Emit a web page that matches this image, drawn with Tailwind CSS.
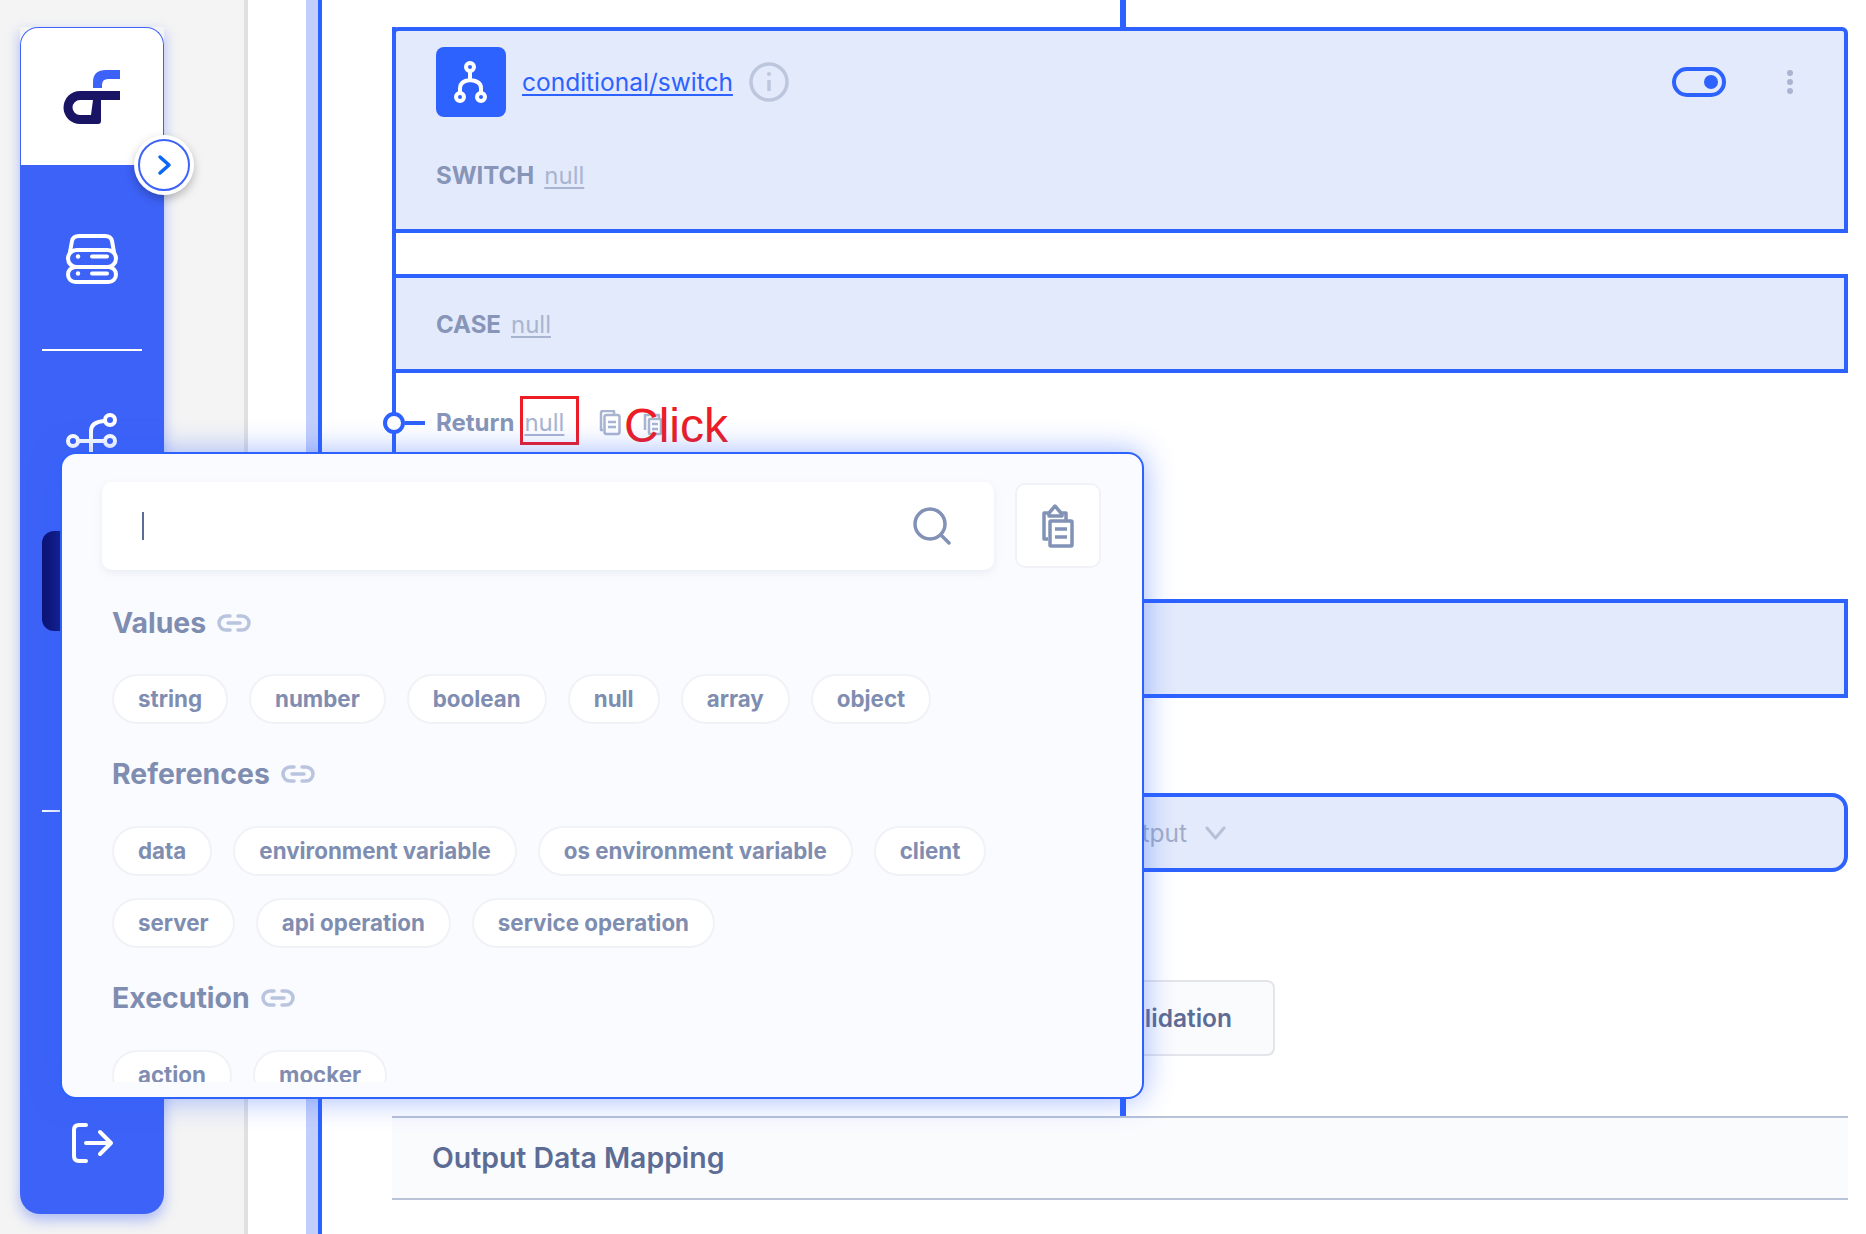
<!DOCTYPE html>
<html lang="en">
<head>
  <meta charset="UTF-8" />
  <meta name="viewport" content="width=device-width, initial-scale=1.0"/>
  <title>Flow editor</title>
  <script src="https://cdn.jsdelivr.net/npm/@tailwindcss/browser@4"></script>
</head>
<body class="relative flex h-[1234px] overflow-hidden bg-white font-['Inter',sans-serif]">
  <!-- Sidebar -->
  <aside class="w-[248px] h-full shrink-0 bg-[#f4f4f4] border-r-4 border-[#e0e0e0] pl-5 pt-[27px]">
    <div class="relative w-[144px] h-[1187px] flex flex-col rounded-b-[20px] shadow-[0_6px_14px_rgba(61,98,247,0.4)]">
      <div class="h-[138px] shrink-0 bg-white border border-b-0 border-[#3d62f7] rounded-t-[18px] flex items-center justify-center">
        <svg class="w-[58px] h-[56px]" viewBox="63 69 58 56">
          <path fill="#3d62f7" d="M93 88 V82 Q93 70 106 70 H120 V79 H108 Q102 79 102 85 V88 Z"/>
          <path fill="#1a1464" fill-rule="evenodd" d="M120 91 H80 A16.5 16.5 0 0 0 80 124 H98 Q101 124 101 121 V100 H120 Z M93 100 H80 A7.5 7.5 0 0 0 80 115 H91 Z"/>
        </svg>
      </div>
      <div class="flex-1 bg-[#3d62f7] rounded-b-[20px] flex flex-col items-center pt-[67px]">
        <svg class="w-[56px] h-[54px] shrink-0" viewBox="64 232 56 54" fill="none" stroke="#fff" stroke-width="4" stroke-linecap="round">
          <path d="M70 252 L72 241 Q73 236 79 236 H105 Q111 236 112 241 L114 252"/>
          <rect x="68" y="250" width="48" height="17" rx="8.5"/>
          <rect x="68" y="267" width="48" height="15" rx="7.5"/>
          <path d="M92 256.500 H107 M92 273.500 H107"/>
          <circle cx="78" cy="256.500" r="2.200" fill="#fff" stroke="none"/>
          <circle cx="78" cy="273.500" r="2.200" fill="#fff" stroke="none"/>
        </svg>
        <div class="w-[100px] h-[2px] bg-white mt-[63px] shrink-0"></div>
        <svg class="w-[56px] h-[50px] mt-[61px] shrink-0" viewBox="64 412 56 50" fill="none" stroke="#fff" stroke-width="4" stroke-linecap="round">
          <circle cx="73" cy="441" r="5"/>
          <circle cx="110" cy="441" r="5"/>
          <circle cx="110" cy="420" r="5"/>
          <path d="M78 441 H105 M91 462 V431 Q91 422 104 421"/>
        </svg>
        <div class="w-5 h-[100px] self-start ml-[22px] mt-[69px] bg-[#0b1070] rounded-l-[12px] shrink-0"></div>
        <div class="w-5 h-[2px] self-start ml-[22px] mt-[179px] bg-white shrink-0"></div>
        <svg class="w-[44px] h-[44px] mt-[309px] shrink-0" viewBox="70 1121 44 44" fill="none" stroke="#fff" stroke-width="4" stroke-linecap="round" stroke-linejoin="round">
          <path d="M86 1125 H79 Q74 1125 74 1130 V1156 Q74 1161 79 1161 H86"/>
          <path d="M86 1143 H110 M100 1132 L111 1143 L100 1154"/>
        </svg>
      </div>
      <!-- Collapse toggle -->
      <div class="absolute left-[114px] top-[108px] w-[60px] h-[60px] rounded-full bg-white shadow-[0_4px_10px_rgba(0,0,0,0.25)] flex items-center justify-center">
        <div class="w-[52px] h-[52px] rounded-full border-2 border-[#3d62f7] flex items-center justify-center">
          <svg class="w-[18px] h-[22px] ml-0.5" viewBox="0 0 18 22" fill="none" stroke="#0b67f5" stroke-width="3.500" stroke-linecap="round" stroke-linejoin="round"><path d="M4 3 L13 11 L4 19"/></svg>
        </div>
      </div>
    </div>
  </aside>

  <!-- Canvas -->
  <main class="flex-1 flex h-full min-w-0">
    <div class="ml-[58px] w-[16px] h-full shrink-0 bg-[#c3cffb] border-r-4 border-[#2d62ff]"></div>
    <div class="ml-[70px] w-[1456px] shrink-0 flex flex-col">
      <div class="ml-[728px] w-[6px] h-[27px] bg-[#2d62ff] shrink-0"></div>

      <div class="border-l-4 border-[#2d62ff] h-[766px] shrink-0">
        <!-- Switch block -->
        <section class="-ml-1 h-[206px] border-4 border-[#2d62ff] rounded-tl-[6px] rounded-tr-[6px] bg-[#e3eafb] pl-[40px] pr-[40px] pt-4">
          <div class="flex items-center h-[70px]">
            <div class="w-[70px] h-[70px] rounded-[8px] bg-[#2d62ff] flex items-center justify-center">
              <svg class="w-[44px] h-[48px]" viewBox="449 58 44 48" fill="none" stroke="#fff" stroke-width="4" stroke-linecap="round">
                <circle cx="470" cy="67" r="4"/><circle cx="460" cy="97" r="4"/><circle cx="481" cy="97" r="4"/>
                <path d="M470 71 V78 M460 93 V88 Q460 81 470 80 Q481 81 481 88 V93"/>
              </svg>
            </div>
            <a class="ml-4 text-[24.5px] leading-[30px] text-[#2d62ff] underline underline-offset-[3px]">conditional/switch</a>
            <svg class="ml-4 w-[40px] h-[40px]" viewBox="0 0 40 40" fill="none" stroke="#bcc7de" stroke-width="3.500"><circle cx="20" cy="20" r="18"/><path d="M20 18 V29"/><circle cx="20" cy="12" r="2" fill="#bcc7de" stroke="none"/></svg>
            <div class="ml-auto w-[54px] h-[30px] rounded-full border-4 border-[#2d62ff] flex items-center justify-end pr-[4px]"><span class="w-[14px] h-[14px] rounded-full bg-[#2d62ff]"></span></div>
            <div class="ml-[61px] mr-[11px] flex flex-col gap-[3px]">
              <span class="w-[6px] h-[6px] rounded-full bg-[#a9b5d0]"></span>
              <span class="w-[6px] h-[6px] rounded-full bg-[#a9b5d0]"></span>
              <span class="w-[6px] h-[6px] rounded-full bg-[#a9b5d0]"></span>
            </div>
          </div>
          <div class="mt-[44px] flex items-center gap-[10px] text-[24px] leading-[30px]">
            <span class="font-bold text-[#8795b8]">SWITCH</span>
            <span class="text-[#a9b5d0] underline underline-offset-[3px]">null</span>
          </div>
        </section>

        <!-- Case block -->
        <section class="-ml-1 mt-[41px] h-[99px] border-4 border-[#2d62ff] bg-[#e3eafb] pl-[40px] pt-[3px] flex items-center gap-[10px] text-[24px] leading-[30px]">
          <span class="font-bold text-[#8795b8]">CASE</span>
          <span class="text-[#a9b5d0] underline underline-offset-[3px]">null</span>
        </section>

        <!-- Return row -->
        <div class="relative h-[50px] mt-[25px] pl-[40px] flex items-center text-[24px] leading-[30px]">
          <span class="absolute -left-[13px] top-[14px] w-[22px] h-[22px] rounded-full bg-white border-4 border-[#2d62ff]"></span>
          <span class="absolute left-[9px] top-[23px] w-[20px] h-1 bg-[#2d62ff]"></span>
          <span class="font-bold text-[#8795b8]">Return</span>
          <span class="ml-[10px] text-[#a9b5d0] underline underline-offset-[3px]">null</span>
          <svg class="ml-[35px] w-[22px] h-[26px]" viewBox="0 0 22 26" fill="none" stroke="#a9b5d0" stroke-width="2.500" stroke-linejoin="round"><path d="M4 20 H2 V3 Q2 1 4 1 H15 V5"/><rect x="5.500" y="5" width="15" height="19" rx="2"/><path d="M9 12 H17 M9 17 H17"/></svg>
          <svg class="ml-[22px] w-[20px] h-[26px]" viewBox="0 0 20 26" fill="none" stroke="#a9b5d0" stroke-width="2.500" stroke-linejoin="round"><path d="M2 20 V5 H6 L9 2 L12 5 H16 V8"/><rect x="6" y="9" width="12" height="15" rx="1"/><path d="M9 14 H15 M9 19 H15"/></svg>
          <!-- Tutorial annotation -->
          <span class="absolute left-[124px] -top-[2px] w-[59px] h-[49px] border-[3px] border-[#ee1c25]"></span>
          <span class="absolute left-[228px] top-0 font-['Liberation_Sans',sans-serif] text-[48px] leading-[56px] text-[#ee1c25]">Click</span>
        </div>

        <section class="-ml-1 mt-[151px] h-[99px] border-4 border-[#2d62ff] bg-[#e3eafb]"></section>
      </div>

      <!-- Output select -->
      <section class="h-[79px] border-4 border-[#2d62ff] rounded-[16px] bg-[#e3eafb] flex items-center pl-[708px] gap-[18px] text-[24.5px] leading-[30px] text-[#a0acc8]">
        <span class="w-[83px] text-right">Output</span>
        <svg class="w-[21px] h-[14px]" viewBox="0 0 21 14" fill="none" stroke="#b6c1d8" stroke-width="3" stroke-linecap="round" stroke-linejoin="round"><path d="M2 2 L10.500 12 L19 2"/></svg>
      </section>

      <!-- Validation button -->
      <div class="mt-[108px] ml-[680px] w-[203px] h-[76px] rounded-[8px] border-2 border-[#e3e5ea] bg-[#fafbfd] flex items-center justify-end pr-[41px] text-[24.5px] font-semibold text-[#5d6c94]">Validation</div>

      <div class="ml-[728px] w-[6px] h-[60px] bg-[#2d62ff] shrink-0"></div>

      <!-- Output data mapping -->
      <section class="h-[84px] border-y-2 border-[#b8c2d9] bg-[#fafbfd] flex items-center pl-[40px] text-[28.4px] font-semibold text-[#5d6c94]">Output Data Mapping</section>
    </div>
  </main>

  <!-- Value picker popover -->
  <div class="absolute left-[60px] top-[452px] w-[1084px] h-[647px] rounded-[16px] border-2 border-[#2d62ff] bg-[#fafbfe] shadow-[0_0_30px_rgba(45,98,255,0.45)] pt-[28px] pl-[40px]">
    <div class="flex gap-[21px]">
      <div class="w-[892px] h-[88px] rounded-[10px] bg-white shadow-[0_3px_8px_rgba(90,110,160,0.1)] flex items-center pl-10 pr-[43px] justify-between">
        <span class="w-[2px] h-[28px] bg-[#5d6c94]"></span>
        <svg class="w-[38px] h-[40px]" viewBox="0 0 38 40" fill="none" stroke="#8192b6" stroke-width="3.500" stroke-linecap="round"><circle cx="17" cy="18" r="15"/><path d="M28 29 L36 37"/></svg>
      </div>
      <div class="w-[86px] h-[85px] mt-px rounded-[10px] bg-white border-2 border-[#f1f2f7] flex items-center justify-center">
        <svg class="w-[32px] h-[44px]" viewBox="0 0 32 44" fill="none" stroke="#8192b6" stroke-width="3.500" stroke-linejoin="round"><path d="M6 35 H2 V9 H7 L13 2 L19 9 H24 V17"/><path d="M7 9 V12 H20 V9"/><rect x="8" y="17" width="22" height="25" rx="1"/><path d="M13 25 H25 M13 33 H25"/></svg>
      </div>
    </div>
    <div class="mt-[35px] h-[477px] w-[1040px] overflow-hidden pl-[10px] text-[#7f8db1]">
      <h3 class="flex items-center gap-[11px] h-[36px] text-[28.4px] font-bold">Values
        <svg class="w-[34px] h-[18px]" viewBox="0 0 34 18" fill="none" stroke="#b9c4de" stroke-width="3.500" stroke-linecap="round"><path d="M13 2 H9 A7 7 0 0 0 9 16 H13 M21 2 H25 A7 7 0 0 1 25 16 H21 M11 9 H23"/></svg>
      </h3>
      <div class="mt-[33px] flex flex-wrap gap-x-[21px] gap-y-[22px] text-[22.35px] font-bold leading-[46px]">
        <span class="px-[24px] rounded-full bg-white border-2 border-[#f1f2f7]">string</span>
        <span class="px-[24px] rounded-full bg-white border-2 border-[#f1f2f7]">number</span>
        <span class="px-[24px] rounded-full bg-white border-2 border-[#f1f2f7]">boolean</span>
        <span class="px-[24px] rounded-full bg-white border-2 border-[#f1f2f7]">null</span>
        <span class="px-[24px] rounded-full bg-white border-2 border-[#f1f2f7]">array</span>
        <span class="px-[24px] rounded-full bg-white border-2 border-[#f1f2f7]">object</span>
      </div>
      <h3 class="mt-[32px] flex items-center gap-[11px] h-[36px] text-[28.4px] font-bold">References
        <svg class="w-[34px] h-[18px]" viewBox="0 0 34 18" fill="none" stroke="#b9c4de" stroke-width="3.500" stroke-linecap="round"><path d="M13 2 H9 A7 7 0 0 0 9 16 H13 M21 2 H25 A7 7 0 0 1 25 16 H21 M11 9 H23"/></svg>
      </h3>
      <div class="mt-[34px] w-[960px] flex flex-wrap gap-x-[21px] gap-y-[22px] text-[22.35px] font-bold leading-[46px]">
        <span class="px-[24px] rounded-full bg-white border-2 border-[#f1f2f7]">data</span>
        <span class="px-[24px] rounded-full bg-white border-2 border-[#f1f2f7]">environment variable</span>
        <span class="px-[24px] rounded-full bg-white border-2 border-[#f1f2f7]">os environment variable</span>
        <span class="px-[24px] rounded-full bg-white border-2 border-[#f1f2f7]">client</span>
        <span class="px-[24px] rounded-full bg-white border-2 border-[#f1f2f7]">server</span>
        <span class="px-[24px] rounded-full bg-white border-2 border-[#f1f2f7]">api operation</span>
        <span class="px-[24px] rounded-full bg-white border-2 border-[#f1f2f7]">service operation</span>
      </div>
      <h3 class="mt-[32px] flex items-center gap-[11px] h-[36px] text-[28.4px] font-bold">Execution
        <svg class="w-[34px] h-[18px]" viewBox="0 0 34 18" fill="none" stroke="#b9c4de" stroke-width="3.500" stroke-linecap="round"><path d="M13 2 H9 A7 7 0 0 0 9 16 H13 M21 2 H25 A7 7 0 0 1 25 16 H21 M11 9 H23"/></svg>
      </h3>
      <div class="mt-[34px] flex flex-wrap gap-x-[21px] gap-y-[22px] text-[22.35px] font-bold leading-[46px]">
        <span class="px-[24px] rounded-full bg-white border-2 border-[#f1f2f7]">action</span>
        <span class="px-[24px] rounded-full bg-white border-2 border-[#f1f2f7]">mocker</span>
      </div>
    </div>
  </div>
</body>
</html>
